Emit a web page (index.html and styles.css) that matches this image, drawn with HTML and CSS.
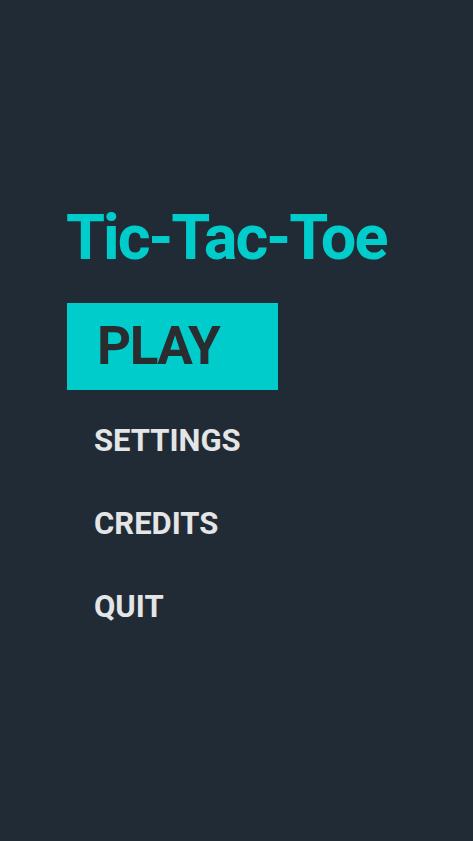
FILE: index.html
```
<!DOCTYPE html>
<html>
<head>
<meta charset="utf-8">
<link rel="stylesheet" href="styles.css">
</head>
<body>
<main class="menu">
  <h1 class="title">Tic-Tac-Toe</h1>
  <ul class="items">
    <li class="item active">PLAY</li>
    <li class="item">SETTINGS</li>
    <li class="item">CREDITS</li>
    <li class="item">QUIT</li>
  </ul>
</main>
</body>
</html>
```
FILE: styles.css
```
html, body {
  margin: 0;
  padding: 0;
  background: #212b35;
  height: 100%;
}
body {
  font-family: Roboto, "Liberation Sans", sans-serif;
}
.menu {
  display: flex;
  flex-direction: column;
  padding: 200px 0 0 66px;
}
.title {
  margin: 0;
  color: #00cccc;
  font-size: 63px;
  font-weight: 700;
  line-height: 76px;
  letter-spacing: -2px;
}
.items {
  list-style: none;
  margin: 0;
  padding: 0;
  display: flex;
  flex-direction: column;
  margin-top: 27px;
}
.item {
  color: #e3e5e6;
  font-size: 31px;
  font-weight: 700;
  padding-left: 28px;
  height: 83px;
  line-height: 83px;
}
.item.active {
  background: #00cccc;
  color: #2a2d30;
  font-size: 53px;
  letter-spacing: -1.5px;
  width: 211px;
  box-sizing: border-box;
  padding-left: 30px;
  height: 87px;
  line-height: 87px;
  margin-left: 1px;
  margin-bottom: 9px;
}
```
